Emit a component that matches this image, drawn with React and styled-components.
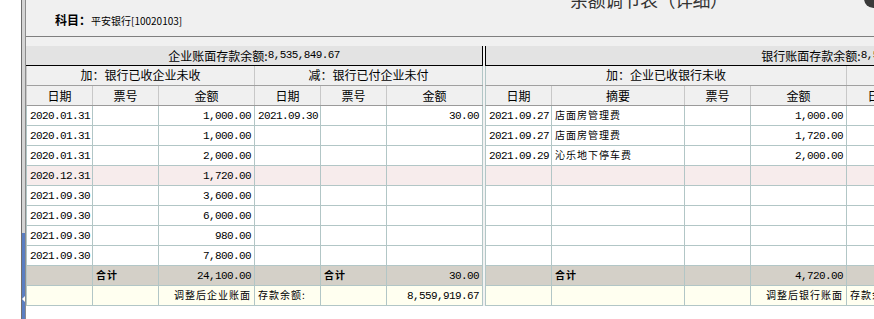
import React from 'react';
import styled, { createGlobalStyle } from 'styled-components';

const GRID = '#b2c6c6';
const HEAD_LINE = '#c8c8c8';

const GlobalStyle = createGlobalStyle`
  html, body {
    margin: 0;
    padding: 0;
    background: #ffffff;
  }
  body {
    font-family: "Noto Sans CJK SC", "Noto Sans", sans-serif;
    color: #000;
  }
`;

const Page = styled.div`
  display: flex;
  width: 874px;
  height: 319px;
  overflow: hidden;
  background: #ffffff;
`;

const Gutter = styled.div`
  flex: none;
  width: 21px;
`;

const Splitter = styled.div`
  position: relative;
  flex: none;
  width: 3px;
  border-left: 1px solid #6e6e6e;
  border-right: 1px solid #8c8c8c;
  background: linear-gradient(to bottom, #d4d4d4 0, #d4d4d4 233px, #5a7ec2 233px);

  &::after {
    content: '';
    position: absolute;
    left: 0;
    top: 296px;
    border-top: 3px solid transparent;
    border-bottom: 3px solid transparent;
    border-right: 3px solid #ffffff;
  }
`;

const Main = styled.div`
  flex: 1;
  min-width: 0;
  overflow: hidden;
  display: flex;
  flex-direction: column;
`;

const TopBar = styled.div`
  position: relative;
  flex: none;
  height: 36px;
  display: flex;
  align-items: flex-start;
  padding-left: 29px;
  background: #f0f0f0;
  border-bottom: 1px solid #7f7f7f;
  overflow: hidden;
`;

const Subject = styled.div`
  width: 515px;
  flex: none;
  margin-top: 12px;
  font-size: 12px;
  line-height: 16px;
  white-space: nowrap;

  b {
    font-weight: 700;
  }

  span {
    font-size: 10px;
  }
`;

const Title = styled.div`
  flex: none;
  margin-top: -14px;
  font-size: 18px;
  color: #333;
  white-space: nowrap;
  letter-spacing: -0.5px;
`;

const CloseDot = styled.div`
  position: absolute;
  right: -9px;
  top: -11px;
  width: 19px;
  height: 19px;
  border-radius: 50%;
  background: #3a3a3a;
`;

const Spacer = styled.div`
  flex: none;
  height: 9px;
  background: #f0f0f0;
`;

const Panes = styled.div`
  display: flex;
  align-items: flex-start;
`;

const Pane = styled.div`
  flex: none;
  display: flex;
  flex-direction: column;
`;

const Divider = styled.div`
  flex: none;
  width: 2px;
  align-self: stretch;
  background: #f2f2f2;
`;

const BalanceBar = styled.div`
  height: 20px;
  box-sizing: border-box;
  background: #e3e3e3;
  border-bottom: 1px solid #000;
  ${p => (p.$side === 'left' ? 'border-right: 1px solid #000;' : 'border-left: 1px solid #000;')}
  display: flex;
  align-items: center;
  justify-content: center;
  font-size: 12px;
  line-height: 19px;
  white-space: nowrap;
`;

const Row = styled.div`
  display: flex;
  height: 20px;
  box-sizing: border-box;
  background: ${p => p.$bg || '#ffffff'};
  border-bottom: 1px solid ${p => p.$bottom || GRID};
  border-left: ${p => (p.$edge ? `1px solid ${p.$line || GRID}` : 'none')};
`;

const Cell = styled.div`
  flex: none;
  width: ${p => p.$w}px;
  height: 19px;
  box-sizing: border-box;
  border-right: 1px solid ${p => p.$line || GRID};
  padding: 1px 3px 0;
  overflow: hidden;
  white-space: nowrap;
  font-size: 11px;
  line-height: 14px;
  text-align: ${p => p.$align || 'left'};
`;

const HeadCell = styled(Cell)`
  text-align: center;
  font-size: 12px;
  line-height: 18px;
  padding-top: ${p => p.$pt || 0}px;
`;

const Num = styled.span`
  font-family: "Liberation Mono", monospace;
  font-size: 11px;
  letter-spacing: -0.6px;
`;

const Han = styled.span`
  font-family: "Noto Sans CJK SC", sans-serif;
  font-size: 10px;
  letter-spacing: 1px;
  font-weight: ${p => (p.$bold ? 600 : 400)};
`;

const BalNum = styled.span`
  font-family: "Liberation Mono", monospace;
  font-size: 11px;
  letter-spacing: -0.6px;
`;

const leftCols = [66, 66, 96, 66, 66, 96];
const rightCols = [66, 133, 66, 96, 66, 133, 66, 96];

const leftRows = [
  { d: '2020.01.31', a: '1,000.00', d2: '2021.09.30', a2: '30.00' },
  { d: '2020.01.31', a: '1,000.00' },
  { d: '2020.01.31', a: '2,000.00' },
  { d: '2020.12.31', a: '1,720.00', pink: true },
  { d: '2021.09.30', a: '3,600.00' },
  { d: '2021.09.30', a: '6,000.00' },
  { d: '2021.09.30', a: '980.00' },
  { d: '2021.09.30', a: '7,800.00' },
];

const rightRows = [
  { d: '2021.09.27', m: '店面房管理费', a: '1,000.00' },
  { d: '2021.09.27', m: '店面房管理费', a: '1,720.00' },
  { d: '2021.09.29', m: '沁乐地下停车费', a: '2,000.00' },
  { pink: true },
  {}, {}, {}, {},
];

const PINK = '#f7ecec';
const TOTAL = '#d4d0c8';
const ADJUST = '#fffff0';

function LeftPane() {
  return (
    <Pane>
      <BalanceBar $side="left">
        企业账面存款余额:<BalNum>8,535,849.67</BalNum>
      </BalanceBar>
      <Row $edge $bg="#f0f0f0" $bottom="#a0a0a0" $line={HEAD_LINE}>
        <HeadCell $w={228} $line={HEAD_LINE}>加：银行已收企业未收</HeadCell>
        <HeadCell $w={228} $line={GRID}>减：银行已付企业未付</HeadCell>
      </Row>
      <Row $edge $bg="#f0f0f0" $bottom="#9a9a9a" $line={HEAD_LINE}>
        {['日期', '票号', '金额', '日期', '票号', '金额'].map((t, i) => (
          <HeadCell key={i} $w={leftCols[i]} $pt={1} $line={i === 5 ? GRID : HEAD_LINE}>{t}</HeadCell>
        ))}
      </Row>
      {leftRows.map((r, i) => (
        <Row key={i} $edge $bg={r.pink ? PINK : '#fff'}>
          <Cell $w={66}><Num>{r.d}</Num></Cell>
          <Cell $w={66} />
          <Cell $w={96} $align="right"><Num>{r.a}</Num></Cell>
          <Cell $w={66}><Num>{r.d2}</Num></Cell>
          <Cell $w={66} />
          <Cell $w={96} $align="right"><Num>{r.a2}</Num></Cell>
        </Row>
      ))}
      <Row $edge $bg={TOTAL}>
        <Cell $w={66} />
        <Cell $w={66}><Han $bold>合计</Han></Cell>
        <Cell $w={96} $align="right"><Num>24,100.00</Num></Cell>
        <Cell $w={66} />
        <Cell $w={66}><Han $bold>合计</Han></Cell>
        <Cell $w={96} $align="right"><Num>30.00</Num></Cell>
      </Row>
      <Row $edge $bg={ADJUST}>
        <Cell $w={66} />
        <Cell $w={66} />
        <Cell $w={96} $align="right"><Han>调整后企业账面</Han></Cell>
        <Cell $w={66}><Han>存款余额:</Han></Cell>
        <Cell $w={66} />
        <Cell $w={96} $align="right"><Num>8,559,919.67</Num></Cell>
      </Row>
    </Pane>
  );
}

function RightPane() {
  return (
    <Pane>
      <BalanceBar $side="right">
        银行账面存款余额:<BalNum>8,559,919.67</BalNum>
      </BalanceBar>
      <Row $edge $line={GRID} $bg="#f0f0f0" $bottom="#a0a0a0">
        <HeadCell $w={361} $line={HEAD_LINE}>加：企业已收银行未收</HeadCell>
        <HeadCell $w={361} $line={HEAD_LINE}>减：企业已付银行未付</HeadCell>
      </Row>
      <Row $edge $line={GRID} $bg="#f0f0f0" $bottom="#9a9a9a">
        {['日期', '摘要', '票号', '金额', '日期', '摘要', '票号', '金额'].map((t, i) => (
          <HeadCell key={i} $w={rightCols[i]} $pt={1} $line={HEAD_LINE}>{t}</HeadCell>
        ))}
      </Row>
      {rightRows.map((r, i) => (
        <Row key={i} $edge $bg={r.pink ? PINK : '#fff'}>
          <Cell $w={66}><Num>{r.d}</Num></Cell>
          <Cell $w={133}><Han>{r.m}</Han></Cell>
          <Cell $w={66} />
          <Cell $w={96} $align="right"><Num>{r.a}</Num></Cell>
          <Cell $w={66} />
          <Cell $w={133} />
          <Cell $w={66} />
          <Cell $w={96} />
        </Row>
      ))}
      <Row $edge $bg={TOTAL}>
        <Cell $w={66} />
        <Cell $w={133}><Han $bold>合计</Han></Cell>
        <Cell $w={66} />
        <Cell $w={96} $align="right"><Num>4,720.00</Num></Cell>
        <Cell $w={66} />
        <Cell $w={133}><Han $bold>合计</Han></Cell>
        <Cell $w={66} />
        <Cell $w={96} $align="right"><Num>0.00</Num></Cell>
      </Row>
      <Row $edge $bg={ADJUST}>
        <Cell $w={66} />
        <Cell $w={133} />
        <Cell $w={66} />
        <Cell $w={96} $align="right"><Han>调整后银行账面</Han></Cell>
        <Cell $w={66}><Han>存款余额:</Han></Cell>
        <Cell $w={133} />
        <Cell $w={66} />
        <Cell $w={96} $align="right"><Num>8,559,919.67</Num></Cell>
      </Row>
    </Pane>
  );
}

export default function App() {
  return (
    <>
      <GlobalStyle />
      <Page>
        <Gutter />
        <Splitter />
        <Main>
          <TopBar>
            <Subject><b>科目：</b><span>平安银行[10020103]</span></Subject>
            <Title>余额调节表（详细）</Title>
            <CloseDot />
          </TopBar>
          <Spacer />
          <Panes>
            <LeftPane />
            <Divider />
            <RightPane />
          </Panes>
        </Main>
      </Page>
    </>
  );
}
